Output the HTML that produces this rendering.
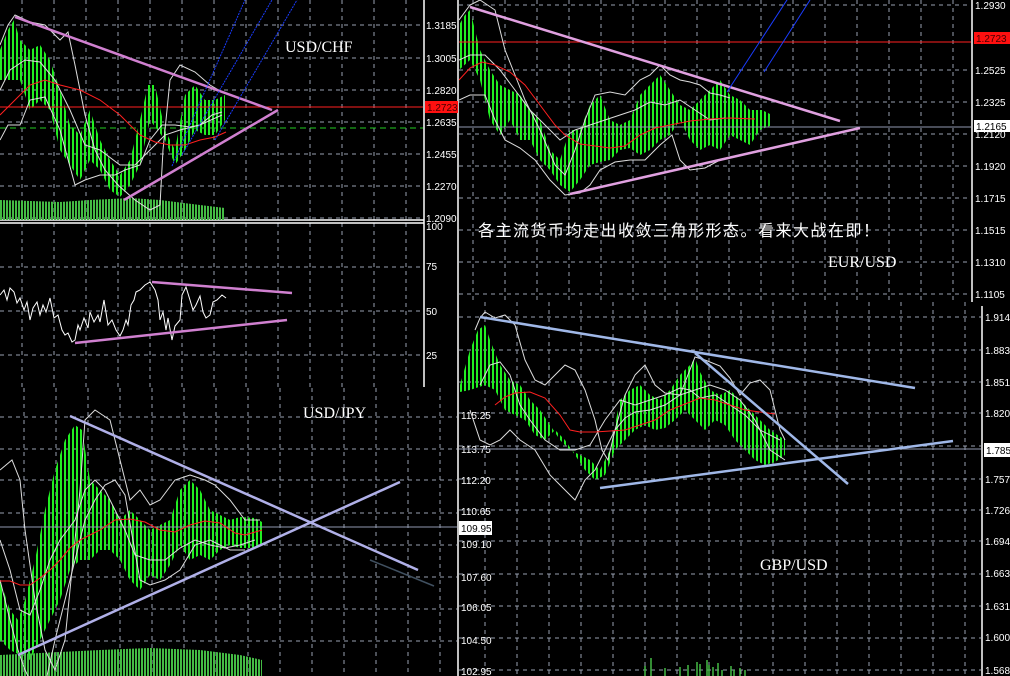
<!DOCTYPE html>
<html><head><meta charset="utf-8"><style>
html,body{margin:0;padding:0;background:#000;width:1010px;height:676px;overflow:hidden}
svg{display:block}
text{font-family:"Liberation Sans","Noto Sans CJK SC",sans-serif;fill:#fff}
.ax{font-size:10px}
.lbl{font-family:"Liberation Serif","Noto Serif CJK SC",serif;font-size:15px;fill:#fff}
</style></head><body>
<svg width="1010" height="676" viewBox="0 0 1010 676" xmlns="http://www.w3.org/2000/svg">
<defs>
<pattern id="bars" width="4" height="4" patternUnits="userSpaceOnUse"><rect x="0" y="0" width="2" height="4" fill="#22ee22"/></pattern>
<pattern id="vol" width="3" height="4" patternUnits="userSpaceOnUse"><rect x="0" y="0" width="2" height="4" fill="#44bb44"/></pattern>
<clipPath id="cCHF"><rect x="0" y="0" width="423" height="220"/></clipPath>
<clipPath id="cRSI"><rect x="0" y="223" width="423" height="165"/></clipPath>
<clipPath id="cEUR"><rect x="459" y="0" width="512" height="300"/></clipPath>
<clipPath id="cJPY"><rect x="0" y="388" width="457" height="288"/></clipPath>
<clipPath id="cGBP"><rect x="459" y="302" width="522" height="374"/></clipPath>
</defs>
<g stroke="#98a0b0" stroke-width="1" stroke-dasharray="4,4" fill="none">
<g clip-path="url(#cCHF)">
<path d="M22 0V220M54 0V220M86 0V220M118 0V220M150 0V220M182 0V220M214 0V220M246 0V220M278 0V220M310 0V220M342 0V220M374 0V220M406 0V220"/>
<path d="M0 25H423M0 58H423M0 90H423M0 122H423M0 154H423M0 186H423M0 218H423"/>
</g>
<g clip-path="url(#cRSI)">
<path d="M22 223V390M54 223V390M86 223V390M118 223V390M150 223V390M182 223V390M214 223V390M246 223V390M278 223V390M310 223V390M342 223V390M374 223V390M406 223V390"/>
<path d="M0 267H423M0 311H423M0 355H423"/>
</g>
<g clip-path="url(#cEUR)">
<path d="M473 0V300M505 0V300M537 0V300M569 0V300M601 0V300M633 0V300M665 0V300M697 0V300M729 0V300M761 0V300M793 0V300M825 0V300M857 0V300M889 0V300M921 0V300M953 0V300"/>
<path d="M459 5H971M459 70H971M459 102H971M459 134H971M459 166H971M459 198H971M459 230H971M459 262H971M459 294H971"/>
</g>
<g clip-path="url(#cJPY)">
<path d="M24 388V676M56 388V676M88 388V676M120 388V676M152 388V676M184 388V676M216 388V676M248 388V676M280 388V676M312 388V676M344 388V676M376 388V676M408 388V676M440 388V676"/>
<path d="M0 417H457M0 449H457M0 480H457M0 513H457M0 545H457M0 577H457M0 609H457M0 641H457"/>
</g>
<g clip-path="url(#cGBP)">
<path d="M485 302V676M517 302V676M549 302V676M581 302V676M613 302V676M645 302V676M677 302V676M709 302V676M741 302V676M773 302V676M805 302V676M837 302V676M869 302V676M901 302V676M933 302V676M965 302V676"/>
<path d="M459 317H981M459 350H981M459 382H981M459 413H981M459 446H981M459 479H981M459 510H981M459 541H981M459 574H981M459 606H981M459 638H981M459 670H981"/>
</g>
</g>

<g stroke="#fff" stroke-width="1.5" fill="none">
<path d="M424 0V387M458 0V676M972 0V302M982 306V676"/>
<path d="M0 220H424M0 223H424"/>
</g>

<!-- CHF -->
<g clip-path="url(#cCHF)">
<polygon fill="url(#bars)" points="0,50 8,30 14,20 20,40 30,50 40,45 50,60 60,90 70,125 80,135 90,110 100,140 110,160 120,175 130,160 140,120 148,85 155,85 165,130 175,150 185,95 195,85 205,100 215,100 225,95 225,120 215,135 205,135 195,130 185,150 175,165 165,140 150,120 140,165 130,185 120,197 110,190 100,170 90,160 80,180 70,165 60,150 50,110 40,100 30,110 20,80 10,80 0,80"/>
<polygon fill="url(#vol)" points="0,200 60,202 90,200 130,198 160,200 200,205 225,208 225,220 0,220"/>
<path d="M0 107H423" stroke="#ff2020" stroke-width="1"/>
<path d="M0 128H423" stroke="#22cc22" stroke-width="1" stroke-dasharray="6,4"/>
<g fill="none" stroke="#ddd" stroke-width="1">
<polyline points="0,45 8,25 15,15 30,22 45,25 55,35 60,40 68,32 75,65 85,115 95,150 105,170 118,185 135,200 150,210 160,205 163,150 170,80 180,65 195,72 210,85 222,92"/>
<polyline points="0,140 8,125 20,125 30,100 45,97 60,130 75,185 85,180 100,175 115,175 125,170 140,165 150,140 162,125 175,125 190,127 200,125 212,115 222,112"/>
<polyline points="0,90 10,70 25,60 40,62 55,80 70,110 85,145 100,150 120,165 135,165 150,150 165,135 180,130 200,125 222,115"/>
</g>
<polyline fill="none" stroke="#ff2020" stroke-width="1" points="0,115 15,100 30,85 45,80 60,85 80,90 100,100 120,115 140,135 155,142 170,145 185,145 200,140 215,137 226,132"/>
<g stroke="#d080d0" stroke-width="2.5">
<line x1="15" y1="17" x2="272" y2="110"/>
<line x1="124" y1="200" x2="278" y2="110"/>
</g>
<g stroke="#1a3cff" stroke-width="1" stroke-dasharray="2,1">
<line x1="172" y1="166" x2="245" y2="0"/>
<line x1="182" y1="155" x2="272" y2="0"/>
<line x1="215" y1="140" x2="297" y2="0"/>
</g>
</g>
<text class="lbl" x="285" y="52" style="font-size:16px">USD/CHF</text>
<g class="ax">
<text x="426" y="29">1.3185</text><text x="426" y="62">1.3005</text><text x="426" y="94">1.2820</text>
<rect x="425" y="101" width="33" height="12" fill="#ff1010"/><text x="427" y="111" style="fill:#400">1.2723</text>
<text x="426" y="126">1.2635</text><text x="426" y="158">1.2455</text><text x="426" y="190">1.2270</text><text x="426" y="222">1.2090</text>
<text x="426" y="230">100</text><text x="426" y="270">75</text><text x="426" y="315">50</text><text x="426" y="359">25</text>
</g>

<!-- RSI -->
<g clip-path="url(#cRSI)">
<polyline fill="none" stroke="#fff" stroke-width="1" points="0,295 4,290 7,300 10,288 14,292 17,303 20,298 24,310 27,302 30,320 33,308 37,302 40,315 43,305 46,312 50,298 54,318 58,315 62,330 65,335 68,333 72,342 75,340 78,325 80,330 84,318 88,328 90,312 94,322 98,315 100,322 104,300 108,325 112,320 116,330 120,336 123,330 126,320 128,325 131,305 134,300 136,292 140,290 145,285 150,282 155,290 158,300 160,320 163,312 166,330 168,318 172,340 175,326 180,320 182,295 186,287 190,300 193,310 196,305 200,296 203,312 206,318 210,315 213,302 217,300 222,295 226,298"/>
<g stroke="#d080d0" stroke-width="2.5">
<line x1="152" y1="282" x2="292" y2="293"/>
<line x1="75" y1="343" x2="287" y2="320"/>
</g>
</g>

<!-- EUR -->
<g clip-path="url(#cEUR)">
<polygon fill="url(#bars)" points="459,25 465,15 470,10 475,30 480,50 490,70 500,85 510,90 520,95 530,110 540,120 550,150 560,160 570,130 580,130 590,105 600,95 610,120 620,125 630,120 640,95 650,85 660,75 670,90 680,105 690,110 700,100 710,90 720,80 730,95 740,100 750,110 762,110 772,115 772,125 760,130 750,145 740,140 730,135 720,150 710,145 700,150 690,140 680,120 670,135 660,140 650,150 640,155 630,148 620,150 610,160 600,162 590,165 580,180 570,192 560,185 550,170 540,160 530,140 520,140 510,120 500,135 490,120 480,80 470,60 459,70"/>
<path d="M459 42H972" stroke="#ff2020" stroke-width="1"/>
<path d="M459 127H972" stroke="#9098b0" stroke-width="1"/>
<g fill="none" stroke="#ddd" stroke-width="1">
<polyline points="459,20 470,5 480,0 495,10 505,50 515,75 525,100 540,130 555,165 565,175 575,150 585,120 595,95 610,92 625,95 640,80 650,75 660,65 670,75 680,80 690,82 700,85 710,93 720,95 730,98"/>
<polyline points="459,100 470,95 485,95 495,120 505,140 520,148 535,160 550,180 565,195 580,193 590,185 600,170 615,162 630,160 645,160 660,145 672,135 680,160 690,170 705,168 720,160 730,158"/>
<polyline points="459,60 470,55 485,55 500,70 515,90 530,110 545,125 560,140 575,130 590,125 605,120 620,115 635,110 650,102 665,105 680,100 695,110 710,120 725,118"/>
</g>
<polyline fill="none" stroke="#ff2020" stroke-width="1" points="459,80 470,68 482,62 495,65 510,72 525,85 540,105 555,125 565,135 580,144 595,146 610,148 625,146 640,135 655,128 670,125 690,121 710,119 730,118 755,119"/>
<g stroke="#e0a0e0" stroke-width="2.5">
<line x1="470" y1="7" x2="840" y2="121"/>
<line x1="570" y1="194" x2="860" y2="128"/>
</g>
<g stroke="#1a3cff" stroke-width="1">
<line x1="727" y1="92" x2="800" y2="-20"/>
<line x1="748" y1="0" x2="760" y2="-15"/>
<line x1="764" y1="72" x2="810" y2="0"/>
</g>
</g>
<text x="478" y="236" style="font-size:16px;letter-spacing:1.5px;fill:#fff">各主流货币均走出收敛三角形形态。看来大战在即！</text>
<text class="lbl" x="828" y="267" style="font-size:16px">EUR/USD</text>
<g class="ax">
<text x="975" y="9">1.2930</text>
<rect x="974" y="32" width="36" height="12" fill="#ff1010"/><text x="976" y="42" style="fill:#400">1.2723</text>
<text x="975" y="74">1.2525</text><text x="975" y="106">1.2325</text>
<rect x="974" y="120" width="36" height="12" fill="#fff"/><text x="976" y="130" style="fill:#000">1.2165</text>
<text x="975" y="138">1.2120</text><text x="975" y="170">1.1920</text><text x="975" y="202">1.1715</text><text x="975" y="234">1.1515</text><text x="975" y="266">1.1310</text><text x="975" y="298">1.1105</text>
</g>

<!-- JPY -->
<g clip-path="url(#cJPY)">
<polygon fill="url(#bars)" points="0,580 10,610 18,620 25,600 35,560 45,510 55,470 65,440 75,425 82,430 90,480 100,490 110,500 120,520 130,510 140,520 150,530 160,525 170,520 180,490 190,480 200,490 210,510 220,515 230,520 240,517 255,518 262,522 262,545 250,548 240,548 230,545 220,550 210,560 200,555 190,560 180,545 170,565 160,580 150,575 140,590 130,580 120,560 110,550 100,550 90,560 80,560 70,570 60,600 50,620 40,640 30,660 20,655 10,650 0,640"/>
<polygon fill="url(#vol)" points="0,655 60,652 100,650 150,648 200,650 240,655 262,660 262,676 0,676"/>
<path d="M0 527H457" stroke="#9098b0" stroke-width="1"/>
<g fill="none" stroke="#ddd" stroke-width="1">
<polyline points="0,470 12,460 20,480 25,530 35,600 45,650 55,670 65,640 70,590 80,490 85,420 95,410 110,420 120,460 130,500 140,490 150,505 160,500 175,480 190,475 205,480 215,485 230,500 245,520 260,520"/>
<polyline points="0,540 10,570 20,610 30,615 40,590 50,560 60,540 75,520 85,490 95,480 105,490 115,510 125,530 135,555 150,560 165,560 180,548 195,540 210,545 225,548 240,545 255,540"/>
<polyline points="0,580 10,620 18,650 25,670 35,690 45,685 55,640 65,600 75,560 85,520 95,500 105,485 115,480 125,495 140,580 150,585 165,580 180,570 195,545 210,540 230,550 245,550"/>
</g>
<polyline fill="none" stroke="#ff2020" stroke-width="1" points="0,581 10,581 20,585 30,585 40,578 50,570 60,560 70,548 80,540 90,535 100,530 115,520 130,519 145,522 160,530 175,532 190,525 205,521 220,523 235,533 245,535 262,530"/>
<g stroke="#b0b0e8" stroke-width="2.5">
<line x1="70" y1="416" x2="418" y2="570"/>
<line x1="18" y1="655" x2="400" y2="482"/>
</g>
<line x1="370" y1="560" x2="434" y2="586" stroke="#405060" stroke-width="1.5"/>
</g>
<text class="lbl" x="303" y="418" style="font-size:16px">USD/JPY</text>
<g class="ax">
<text x="461" y="419">115.25</text><text x="461" y="453">113.75</text><text x="461" y="484">112.20</text><text x="461" y="515">110.65</text>
<rect x="459" y="521" width="33" height="14" fill="#fff"/><text x="461" y="532" style="fill:#000">109.95</text>
<text x="461" y="548">109.10</text><text x="461" y="581">107.60</text><text x="461" y="611">106.05</text><text x="461" y="644">104.50</text><text x="461" y="675">102.95</text>
</g>

<!-- GBP -->
<g clip-path="url(#cGBP)">
<polygon fill="url(#bars)" points="460,385 470,350 478,330 485,325 490,340 500,365 510,380 520,385 530,400 540,410 550,425 560,440 570,450 580,455 590,460 600,470 610,450 620,400 630,390 640,385 650,395 660,400 670,390 680,375 690,365 695,358 700,372 710,390 720,395 730,390 740,400 750,410 760,420 770,430 785,440 785,455 775,462 765,465 755,460 745,450 735,440 725,425 715,420 705,430 695,420 685,410 675,420 665,428 655,430 645,425 635,430 625,440 615,450 605,475 595,480 585,470 575,455 565,440 555,430 545,440 535,435 525,420 515,415 505,410 495,390 485,385 470,390 460,392"/>
<path d="M459 449H982" stroke="#9098b0" stroke-width="1"/>
<g fill="none" stroke="#ddd" stroke-width="1">
<polyline points="475,330 480,318 485,312 495,318 505,315 515,325 525,360 535,380 545,385 555,375 565,365 575,370 585,390 595,420 602,450 608,460 615,430 625,395 635,375 645,365 655,385 665,393 680,395 695,357 705,360 720,366 730,378 740,395 750,383 760,380 770,390 780,430 785,440"/>
<polyline points="480,385 490,365 500,362 510,375 520,405 530,420 545,440 560,450 575,450 590,445 605,420 620,400 635,405 650,400 665,395 680,388 690,390 700,398 715,395 730,405 745,415 760,430 780,440"/>
<polyline points="470,410 480,440 490,445 500,440 510,430 520,440 535,450 550,475 565,490 575,500 585,480 595,470 605,450 615,430 625,418 635,412 650,410 665,405 680,395 695,390 710,385 725,390 740,400 755,420 770,450 785,460"/>
</g>
<polyline fill="none" stroke="#ff2020" stroke-width="1" points="495,405 505,397 515,393 530,392 545,398 560,415 570,430 580,432 595,432 610,431 625,430 640,425 655,420 670,410 685,404 700,398 715,400 730,405 745,410 760,412 775,414"/>
<g stroke="#a0b8e8" stroke-width="2.5">
<line x1="480" y1="317" x2="915" y2="388"/>
<line x1="600" y1="488" x2="953" y2="441"/>
<line x1="695" y1="353" x2="848" y2="484"/>
</g>
<g stroke="#44bb44" stroke-width="1.5">
<path d="M651 658V676M645 666V676M665 668V676M680 667V676M688 665V676M697 662V676M700 664V676M707 660V676M709 665V676M713 667V676M718 663V676M722 670V676M731 666V676M734 670V676M740 668V676M745 670V676"/>
</g>
</g>
<text class="lbl" x="760" y="570" style="font-size:16px">GBP/USD</text>
<g class="ax">
<text x="985" y="321">1.9145</text><text x="985" y="354">1.8830</text><text x="985" y="386">1.8515</text><text x="985" y="417">1.8200</text>
<rect x="984" y="443" width="26" height="14" fill="#fff"/><text x="986" y="454" style="fill:#000">1.785</text>
<text x="985" y="483">1.7575</text><text x="985" y="514">1.7260</text><text x="985" y="545">1.6945</text><text x="985" y="577">1.6630</text><text x="985" y="610">1.6315</text><text x="985" y="641">1.6000</text><text x="985" y="674">1.5685</text>
</g>
</svg>
</body></html>
